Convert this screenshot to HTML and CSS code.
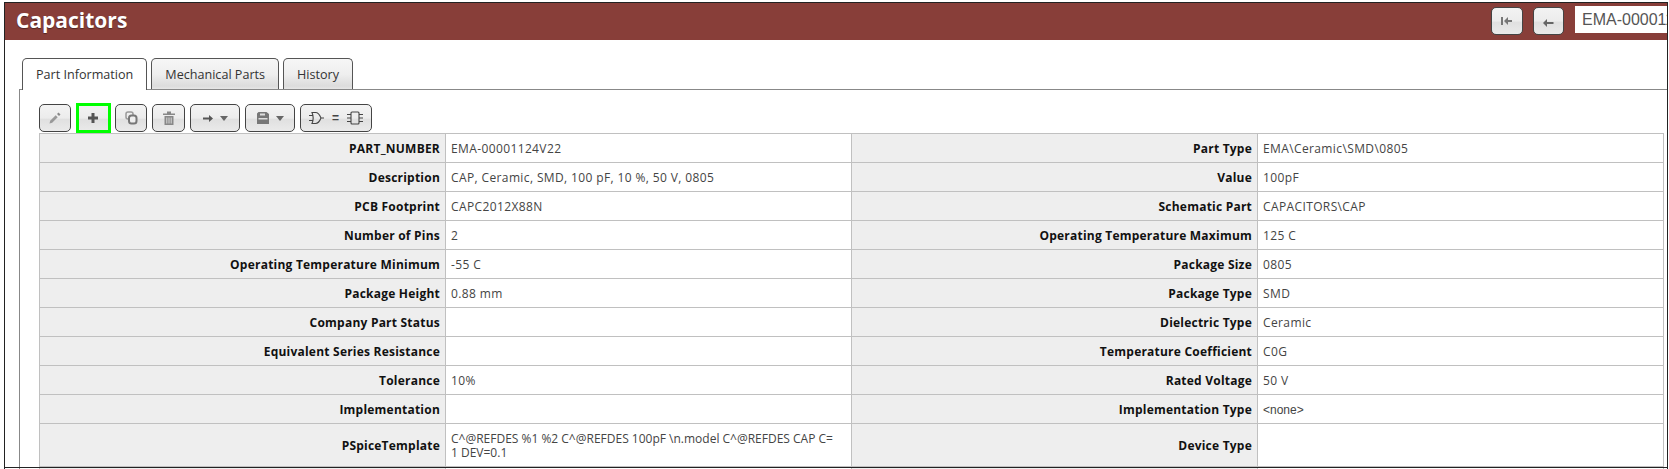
FILE: index.html
```html
<!DOCTYPE html>
<html lang="en">
  <head>
    <meta charset="UTF-8" />
    <meta name="viewport" content="width=device-width, initial-scale=1.0" />
    <title>Capacitors</title>
    <link rel="stylesheet" href="styles.css">
  </head>
  <body>
    <div class="frame">
      <div class="page-header">
        <h1 class="page-title">Capacitors</h1>
        <button class="btn nav-btn">
          <svg width="12" height="10" viewBox="0 0 12 10"><path d="M0 1h2v8H0zM3 5l4-4v3h4v2H7v3z" fill="#777"/></svg>
        </button>
        <button class="btn nav-btn prev-btn">
          <svg class="prev-icon" width="11" height="10" viewBox="0 0 11 10"><path d="M0 5l4-4v3h6.500v2H4v3z" fill="#666"/></svg>
        </button>
        <input class="part-input" type="text" value="EMA-00001124V22">
      </div>

      <div class="tabs">
        <div class="tab-header">
          <span class="tab-item active">Part Information</span>
          <span class="tab-item">Mechanical Parts</span>
          <span class="tab-item">History</span>
        </div>
        <div class="tab-panel">
          <div class="toolbar">
            <button class="btn tool-btn">
              <svg width="12" height="12" viewBox="0 0 12 12"><path d="M0.500 11.500l.7-2.700 5.500-5.500 2 2-5.500 5.500z" fill="#999"/><path d="M8 2l1.500-1.500 2 2L10 4z" fill="#888"/></svg>
            </button>
            <button class="btn tool-btn add-btn">
              <svg width="12" height="12" viewBox="0 0 12 12"><path d="M4.500 1h3v3.500H11v3H7.500V11h-3V7.500H1v-3h3.500z" fill="#555"/></svg>
            </button>
            <button class="btn tool-btn">
              <svg width="13" height="14" viewBox="0 0 13 14"><rect x="1" y="1" width="7" height="7" rx="2" fill="none" stroke="#999" stroke-width="1.500"/><rect x="4" y="4.500" width="7.500" height="8" rx="2.500" fill="#eee" stroke="#777" stroke-width="2"/></svg>
            </button>
            <button class="btn tool-btn">
              <svg width="12" height="14" viewBox="0 0 12 14"><path d="M0 2.500h12V4H0zM4 .5h4v2H4z" fill="#888"/><path d="M1.500 5h9v9h-9z" fill="#888"/><path d="M3.800 6.500v6M6 6.500v6M8.200 6.500v6" stroke="#eee" stroke-width=".8"/></svg>
            </button>
            <button class="btn tool-btn wide-btn">
              <svg width="10" height="10" viewBox="0 0 10 10"><path d="M10 5.500L6 2v2.500H0v2h6V9z" fill="#555"/></svg>
              <span class="caret"></span>
            </button>
            <button class="btn tool-btn wide-btn">
              <svg width="12" height="12" viewBox="0 0 12 12"><path d="M1.500 0h8L12 2v10H0V1.500z" fill="#777"/><path d="M3 1.500h5v2H3zM1.500 6h9v1.500h-9z" fill="#ddd"/></svg>
              <span class="caret"></span>
            </button>
            <button class="btn tool-btn link-btn">
              <svg width="15" height="14" viewBox="0 0 15 14" fill="none" stroke="#444" stroke-width="1.100"><path d="M3 1.500h3.500c2.500 0 4.500 3 5.500 5.500-1 2.500-3 5.500-5.500 5.500H3c1.500-3.500 1.500-7.500 0-11zM0 4.500h4M0 9.500h4M12 7h3"/></svg>
              <span class="equals">=</span>
              <svg width="16" height="14" viewBox="0 0 16 14" fill="none" stroke="#444" stroke-width="1.100"><rect x="4" y="1" width="8" height="12" rx="1"/><path d="M0 3.500h4M0 7h4M0 10.500h4M12 3.500h4M12 7h4M12 10.500h4"/></svg>
            </button>
          </div>

          <table class="part-table">
            <tr>
              <th>PART_NUMBER</th><td>EMA-00001124V22</td>
              <th>Part Type</th><td>EMA\Ceramic\SMD\0805</td>
            </tr>
            <tr>
              <th>Description</th><td>CAP, Ceramic, SMD, 100 pF, 10 %, 50 V, 0805</td>
              <th>Value</th><td>100pF</td>
            </tr>
            <tr>
              <th>PCB Footprint</th><td>CAPC2012X88N</td>
              <th>Schematic Part</th><td>CAPACITORS\CAP</td>
            </tr>
            <tr>
              <th>Number of Pins</th><td>2</td>
              <th>Operating Temperature Maximum</th><td>125 C</td>
            </tr>
            <tr>
              <th>Operating Temperature Minimum</th><td>-55 C</td>
              <th>Package Size</th><td>0805</td>
            </tr>
            <tr>
              <th>Package Height</th><td>0.88 mm</td>
              <th>Package Type</th><td>SMD</td>
            </tr>
            <tr>
              <th>Company Part Status</th><td></td>
              <th>Dielectric Type</th><td>Ceramic</td>
            </tr>
            <tr>
              <th>Equivalent Series Resistance</th><td></td>
              <th>Temperature Coefficient</th><td>C0G</td>
            </tr>
            <tr>
              <th>Tolerance</th><td>10%</td>
              <th>Rated Voltage</th><td>50 V</td>
            </tr>
            <tr>
              <th>Implementation</th><td></td>
              <th>Implementation Type</th><td class="plain">&lt;none&gt;</td>
            </tr>
            <tr>
              <th>PSpiceTemplate</th><td class="tall">C^@REFDES %1 %2 C^@REFDES 100pF \n.model C^@REFDES CAP C=<br>1 DEV=0.1</td>
              <th>Device Type</th><td></td>
            </tr>
            <tr>
              <th></th><td></td>
              <th></th><td></td>
            </tr>
          </table>
        </div>
      </div>
    </div>
  </body>
</html>
```

FILE: styles.css
```css
html,
body {
  margin: 0;
  height: 469px;
  overflow: hidden;
  background: #fff;
}

.frame {
  position: relative;
  height: 467px;
  margin: 2px 1px 0 4px;
  border: 1px solid #222;
  border-bottom: 0;
  overflow: hidden;
  font-family: "Open Sans", "Noto Sans", sans-serif;
}

/* bottom edge lies over the table, it carries on below */
.frame::after {
  content: "";
  position: absolute;
  left: 0;
  right: 0;
  top: 464px;
  height: 1px;
  background: #222;
}

.page-header {
  display: flex;
  align-items: flex-start;
  height: 37px;
  background: #883e39;
}

.page-title {
  flex: 1;
  margin: 0;
  padding: 2px 0 0 11px;
  font-size: 21px;
  line-height: 30px;
  font-weight: 700;
  color: #fff;
  text-shadow: 0 1px 1px rgba(0, 0, 0, 0.4);
}

.btn {
  display: flex;
  align-items: center;
  justify-content: center;
  box-sizing: border-box;
  padding: 0;
  border: 1px solid #444;
  border-radius: 5px;
  background: linear-gradient(#f3f3f3, #ececec 50%, #e0e0e0 55%, #eaeaea);
}

.nav-btn {
  width: 32px;
  height: 28px;
  margin-top: 4px;
  margin-right: 10px;
}

.prev-btn {
  width: 31px;
  margin-right: 11px;
}

.prev-icon {
  margin-top: 3px;
}

.part-input {
  flex-shrink: 0;
  box-sizing: border-box;
  width: 160px;
  height: 27px;
  margin: 3px -68px 0 0;
  padding: 0 7px;
  border: 0;
  font-family: "Liberation Sans", Arial, sans-serif;
  font-size: 16px;
  color: #555;
  background: #fff;
}

.tabs {
  padding: 18px 0 0 14px;
}

.tabs .tab-header {
  position: relative;
  z-index: 1;
  display: flex;
  gap: 4px;
  height: 31px;
  padding-left: 3px;
}

.tabs .tab-item {
  box-sizing: border-box;
  height: 31px;
  padding: 0 13px;
  border: 1px solid #555;
  border-bottom: 0;
  border-radius: 5px 5px 0 0;
  font-size: 12.600px;
  line-height: 31px;
  color: #333;
  background: linear-gradient(#f6f6f6, #efefef 50%, #dcdcdc 90%, #e6e6e6);
}

.tabs .tab-item.active {
  height: 32px;
  background: #fff;
}

.tabs .tab-panel {
  border-top: 1px solid #888;
  border-left: 1px solid #888;
  padding: 14px 0 0 19px;
}

.toolbar {
  display: flex;
  gap: 5px;
  height: 29px;
}

.tool-btn {
  width: 32px;
  height: 28px;
}

.tool-btn:nth-child(4) {
  width: 33px;
}

.add-btn {
  position: relative;
  width: 34px;
}

/* square highlight drawn over the button */
.add-btn::after {
  content: "";
  position: absolute;
  top: -2px;
  left: -1px;
  right: -2px;
  bottom: -2px;
  border: 3px solid #0f0;
}

.wide-btn {
  width: 50px;
  gap: 7px;
}

.link-btn {
  width: 72px;
  gap: 8px;
}

.equals {
  font-size: 12px;
  font-weight: 700;
  color: #444;
}

.caret {
  width: 0;
  height: 0;
  border-left: 4px solid transparent;
  border-right: 4px solid transparent;
  border-top: 5px solid #666;
}

.part-table {
  width: 1625px;
  border-collapse: collapse;
  table-layout: fixed;
  font-size: 12px;
}

.part-table th,
.part-table td {
  box-sizing: border-box;
  height: 29px;
  padding: 0 5px;
  border: 1px solid #c0c0c0;
}

.part-table th {
  text-align: right;
  font-weight: 700;
  letter-spacing: 0.22px;
  color: #111;
  background: #eee;
}

.part-table td {
  padding-top: 1px;
  letter-spacing: 0.38px;
  color: #444;
  line-height: 16px;
}

.part-table td.tall {
  height: 43px;
  white-space: nowrap;
  line-height: 14px;
  letter-spacing: 0;
}

.part-table td.plain {
  font-family: "Liberation Sans", Arial, sans-serif;
  letter-spacing: 0;
}
```
